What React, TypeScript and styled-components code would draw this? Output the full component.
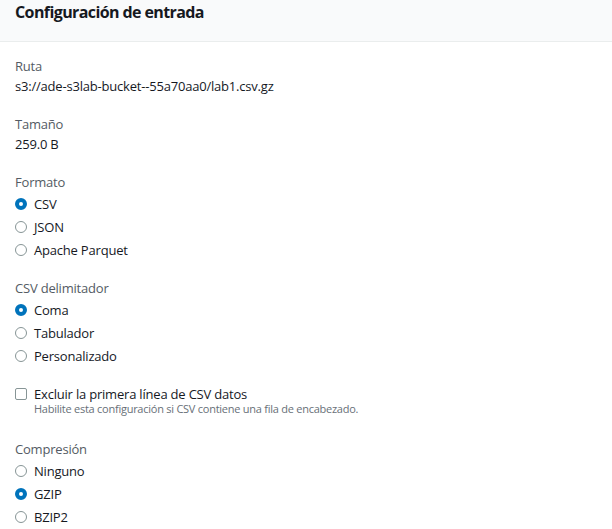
import React from "react";
import styled, { createGlobalStyle } from "styled-components";

const Global = createGlobalStyle`
  html, body { margin: 0; padding: 0; background: #ffffff; }
  body { font-family: "Open Sans", "Noto Sans", Arial, sans-serif; color: #16191f; }
`;

const Panel = styled.div`
  width: 612px;
  height: 529px;
  overflow: hidden;
  background: #ffffff;
`;

const Header = styled.div`
  height: 42px;
  box-sizing: border-box;
  background: #f9fafb;
  border-bottom: 1px solid #eaeded;
  padding: 0 15px;
  display: flex;
  align-items: flex-start;
`;

const Title = styled.h2`
  margin: 0;
  padding-top: 1px;
  font-size: 16px;
  line-height: 22px;
  font-weight: 700;
  letter-spacing: -0.6px;
  color: #16191f;
`;

const Body = styled.div`
  padding: 14px 15px 0 15px;
  display: flex;
  flex-direction: column;
  gap: 17px;
`;

const Field = styled.div`
  display: flex;
  flex-direction: column;
`;

const Label = styled.div`
  font-size: 13px;
  line-height: 20px;
  letter-spacing: -0.2px;
  color: #545b64;
`;

const Value = styled.div`
  font-size: 13px;
  line-height: 21px;
  letter-spacing: -0.2px;
  color: #16191f;
`;

const OptionRow = styled.label`
  display: flex;
  align-items: center;
  gap: 7px;
  height: 23px;
  font-size: 13px;
  letter-spacing: -0.2px;
  color: #16191f;
`;

const RadioDot = styled.span<{ $checked?: boolean }>`
  width: 12px;
  height: 12px;
  box-sizing: border-box;
  border-radius: 50%;
  flex: none;
  border: ${(p) => (p.$checked ? "4px solid #0073bb" : "1px solid #879596")};
  background: #ffffff;
`;

const Box = styled.span`
  width: 12px;
  height: 12px;
  box-sizing: border-box;
  border: 1px solid #879596;
  border-radius: 2px;
  flex: none;
`;

const CheckWrap = styled.div`
  display: flex;
  flex-direction: column;
  margin-top: -2px;
  padding-bottom: 6px;
`;

const Hint = styled.div`
  padding-left: 19px;
  font-size: 11px;
  line-height: 14px;
  letter-spacing: -0.25px;
  color: #687078;
  margin-top: -3px;
`;

const Radio = ({ label, checked }: { label: string; checked?: boolean }) => (
  <OptionRow>
    <RadioDot $checked={checked} />
    {label}
  </OptionRow>
);

const Group = ({ title, options, selected }: { title: string; options: string[]; selected: number }) => (
  <Field>
    <Label>{title}</Label>
    {options.map((o, i) => (
      <Radio key={o} label={o} checked={i === selected} />
    ))}
  </Field>
);

export default function App() {
  return (
    <Panel>
      <Global />
      <Header>
        <Title>Configuración de entrada</Title>
      </Header>
      <Body>
        <Field>
          <Label>Ruta</Label>
          <Value>s3://ade-s3lab-bucket--55a70aa0/lab1.csv.gz</Value>
        </Field>
        <Field>
          <Label>Tamaño</Label>
          <Value>259.0 B</Value>
        </Field>
        <Group title="Formato" options={["CSV", "JSON", "Apache Parquet"]} selected={0} />
        <Group title="CSV delimitador" options={["Coma", "Tabulador", "Personalizado"]} selected={0} />
        <CheckWrap>
          <OptionRow>
            <Box />
            Excluir la primera línea de CSV datos
          </OptionRow>
          <Hint>Habilite esta configuración si CSV contiene una fila de encabezado.</Hint>
        </CheckWrap>
        <Group title="Compresión" options={["Ninguno", "GZIP", "BZIP2"]} selected={1} />
      </Body>
    </Panel>
  );
}
